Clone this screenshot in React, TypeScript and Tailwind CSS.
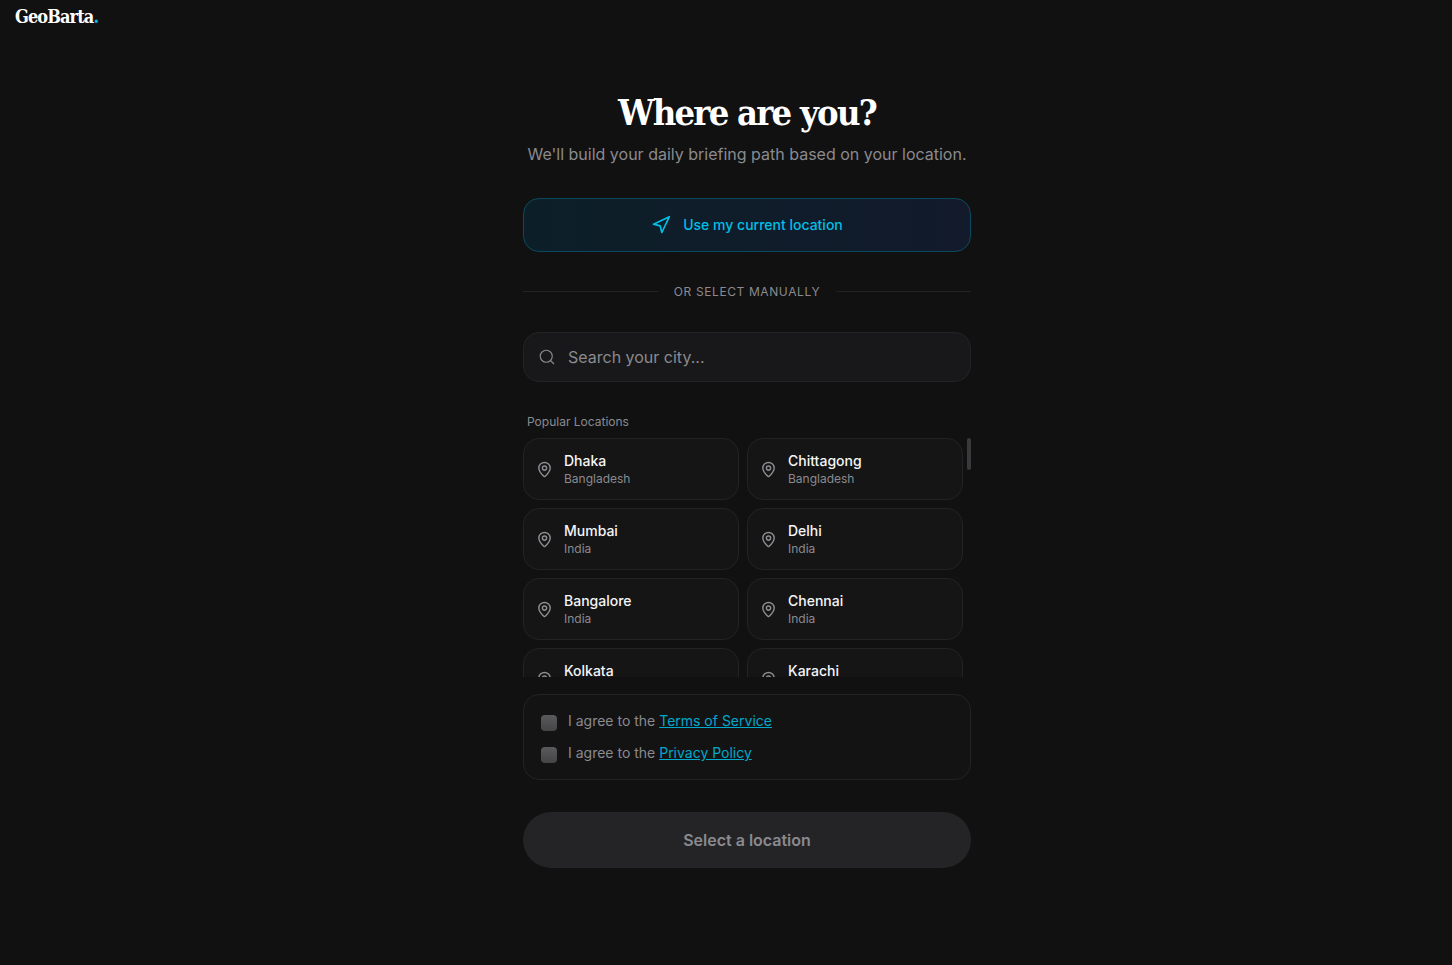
import { Navigation, Search, MapPin } from "lucide-react";

const cities = [
  ["Dhaka", "Bangladesh"],
  ["Chittagong", "Bangladesh"],
  ["Mumbai", "India"],
  ["Delhi", "India"],
  ["Bangalore", "India"],
  ["Chennai", "India"],
  ["Kolkata", "India"],
  ["Karachi", "Pakistan"],
];

function Card({ name, country }: { name: string; country: string }) {
  return (
    <div className="flex h-[62px] items-center gap-[11.5px] rounded-2xl border border-[#232326] bg-[#151516] pl-[11.5px]">
      <MapPin size={17} strokeWidth={2} className="shrink-0 text-[#8e8e93]" />
      <div className="flex flex-col">
        <span className="text-sm leading-5 font-medium text-[#f5f5f7]">{name}</span>
        <span className="text-xs leading-4 text-[#8a8a8f]">{country}</span>
      </div>
    </div>
  );
}

function Agree({ label }: { label: string }) {
  return (
    <div className="flex h-5 items-center gap-[11px]">
      <span className="mt-1 h-4 w-4 rounded bg-gradient-to-b from-[#5a5a5c] to-[#454547]" />
      <span className="text-sm leading-5 text-[#8a8a8f]">
        I agree to the <span className="text-[#00a8cc] underline">{label}</span>
      </span>
    </div>
  );
}

export default function App() {
  return (
    <div className="min-h-[965px] bg-[#111111] font-['Inter',sans-serif] antialiased">
      <header className="h-[88px] pl-[15px] pt-[5px]">
        <span className="font-['DejaVu_Serif_Condensed','DejaVu_Serif',serif] text-[18px] leading-[22px] font-bold tracking-[-0.9px] text-white">
          GeoBarta<span className="text-[#00b8e0]">.</span>
        </span>
      </header>
      <div className="flex justify-center pl-[42px]">
        <main className="flex w-[448px] flex-col">
          <h1 className="text-center font-['DejaVu_Serif_Condensed','DejaVu_Serif',serif] text-[36px] leading-[48px] font-bold tracking-[-1.75px] text-white">
            Where are you?
          </h1>
          <p className="mt-[6px] text-center text-base leading-6 text-[#8a8a8f]">
            We'll build your daily briefing path based on your location.
          </p>
          <button className="mt-[32px] flex h-[54px] items-center justify-center gap-3 rounded-2xl border border-[#0b4a5e] bg-gradient-to-r from-[#0c1f28] to-[#121a2c] text-sm font-medium text-[#00bfe6]">
            <Navigation size={20} strokeWidth={2} />
            Use my current location
          </button>
          <div className="mt-[30px] flex h-[18px] items-center gap-4">
            <div className="h-px flex-1 bg-[#232326]" />
            <span className="pt-[2px] text-xs leading-4 tracking-[0.6px] text-[#8a8a8f]">OR SELECT MANUALLY</span>
            <div className="h-px flex-1 bg-[#232326]" />
          </div>
          <div className="mt-[32px] flex h-[50px] items-center gap-3 rounded-2xl border border-[#232326] bg-[#18181a] pl-[14px]">
            <Search size={18} strokeWidth={1.5} className="text-[#8a8a8f]" />
            <span className="text-base text-[#8a8a8f]">Search your city...</span>
          </div>
          <div className="mt-[32px] pl-1 text-xs leading-4 text-[#8a8a8f]">Popular Locations</div>
          <div className="relative mt-2 h-[239px] overflow-hidden">
            <div className="grid w-[440px] grid-cols-2 gap-2">
              {cities.map(([n, c]) => (
                <Card key={n} name={n} country={c} />
              ))}
            </div>
            <div className="absolute top-0 right-0 h-8 w-1 rounded-full bg-[#3a3a3c]" />
          </div>
          <div className="mt-[17px] flex h-[86px] flex-col justify-center gap-3 rounded-2xl border border-[#232326] bg-[#131314] pl-[17px]">
            <Agree label="Terms of Service" />
            <Agree label="Privacy Policy" />
          </div>
          <button className="mt-[32px] h-14 rounded-full bg-[#242426] text-base font-semibold text-[#8a8a8f]">
            Select a location
          </button>
        </main>
      </div>
    </div>
  );
}
